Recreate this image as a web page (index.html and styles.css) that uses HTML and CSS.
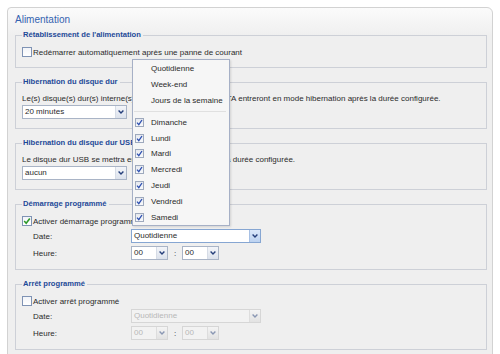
FILE: index.html
```html
<!DOCTYPE html>
<html lang="fr">

<head>
    <meta charset="UTF-8">
    <title>Alimentation</title>
    <link rel="stylesheet" href="styles.css">
</head>

<body>
    <div class="panel">
        <h1 class="panel-title">Alimentation</h1>

        <fieldset class="group">
            <legend>Rétablissement de l'alimentation</legend>
            <div class="check-row"><span class="check"></span>Redémarrer automatiquement après une panne de courant</div>
        </fieldset>

        <fieldset class="group">
            <legend>Hibernation du disque dur</legend>
            <div class="text-row">Le(s) disque(s) dur(s) interne(s) et le(s) disque(s) dur eSATA entreront en mode hibernation après la durée configurée.</div>
            <div class="select select-wide">
                <span class="select-value">20 minutes</span>
                <span class="select-btn"><svg width="6" height="4" viewBox="0 0 6 4"><path d="M0.6 0.6 L3 3 L5.4 0.6" fill="none" stroke="#263f7a" stroke-width="1.4"/></svg></span>
            </div>
        </fieldset>

        <fieldset class="group">
            <legend>Hibernation du disque dur USB</legend>
            <div class="text-row">Le disque dur USB se mettra en mode hibernation après la durée configurée.</div>
            <div class="select select-wide">
                <span class="select-value">aucun</span>
                <span class="select-btn"><svg width="6" height="4" viewBox="0 0 6 4"><path d="M0.6 0.6 L3 3 L5.4 0.6" fill="none" stroke="#263f7a" stroke-width="1.4"/></svg></span>
            </div>
        </fieldset>

        <fieldset class="group">
            <legend>Démarrage programmé</legend>
            <div class="check-row"><span class="check checked"><svg width="8" height="8" viewBox="0 0 8 8"><path d="M1.2 4 L3.2 6.2 L6.8 1.4" fill="none" stroke="#2f9a2a" stroke-width="1.6"/></svg></span>Activer démarrage programmé</div>
            <div class="field-row">
                <span class="field-label">Date:</span>
                <div class="select select-date focus">
                    <span class="select-value">Quotidienne</span>
                    <span class="select-btn"><svg width="6" height="4" viewBox="0 0 6 4"><path d="M0.6 0.6 L3 3 L5.4 0.6" fill="none" stroke="#263f7a" stroke-width="1.4"/></svg></span>
                </div>
            </div>
            <div class="field-row">
                <span class="field-label">Heure:</span>
                <div class="select select-time">
                    <span class="select-value">00</span>
                    <span class="select-btn"><svg width="6" height="4" viewBox="0 0 6 4"><path d="M0.6 0.6 L3 3 L5.4 0.6" fill="none" stroke="#263f7a" stroke-width="1.4"/></svg></span>
                </div>
                <span class="colon">:</span>
                <div class="select select-time">
                    <span class="select-value">00</span>
                    <span class="select-btn"><svg width="6" height="4" viewBox="0 0 6 4"><path d="M0.6 0.6 L3 3 L5.4 0.6" fill="none" stroke="#263f7a" stroke-width="1.4"/></svg></span>
                </div>
            </div>
        </fieldset>

        <fieldset class="group">
            <legend>Arrêt programmé</legend>
            <div class="check-row"><span class="check"></span>Activer arrêt programmé</div>
            <div class="field-row">
                <span class="field-label">Date:</span>
                <div class="select select-date disabled">
                    <span class="select-value">Quotidienne</span>
                    <span class="select-btn"><svg width="6" height="4" viewBox="0 0 6 4"><path d="M0.6 0.6 L3 3 L5.4 0.6" fill="none" stroke="#8a97b3" stroke-width="1.4"/></svg></span>
                </div>
            </div>
            <div class="field-row">
                <span class="field-label">Heure:</span>
                <div class="select select-time disabled">
                    <span class="select-value">00</span>
                    <span class="select-btn"><svg width="6" height="4" viewBox="0 0 6 4"><path d="M0.6 0.6 L3 3 L5.4 0.6" fill="none" stroke="#8a97b3" stroke-width="1.4"/></svg></span>
                </div>
                <span class="colon">:</span>
                <div class="select select-time disabled">
                    <span class="select-value">00</span>
                    <span class="select-btn"><svg width="6" height="4" viewBox="0 0 6 4"><path d="M0.6 0.6 L3 3 L5.4 0.6" fill="none" stroke="#8a97b3" stroke-width="1.4"/></svg></span>
                </div>
            </div>
        </fieldset>
    </div>

    <!-- open dropdown of the Date select -->
    <div class="menu">
        <div class="menu-item"><span class="menu-icon"></span>Quotidienne</div>
        <div class="menu-item"><span class="menu-icon"></span>Week-end</div>
        <div class="menu-item"><span class="menu-icon"></span>Jours de la semaine</div>
        <div class="menu-sep"></div>
        <div class="menu-item"><span class="menu-icon"><span class="menu-check"><svg width="7" height="7" viewBox="0 0 7 7"><path d="M1 3.6 L2.8 5.6 L6 1" fill="none" stroke="#2d4fb0" stroke-width="1.3"/></svg></span></span>Dimanche</div>
        <div class="menu-item"><span class="menu-icon"><span class="menu-check"><svg width="7" height="7" viewBox="0 0 7 7"><path d="M1 3.6 L2.8 5.6 L6 1" fill="none" stroke="#2d4fb0" stroke-width="1.3"/></svg></span></span>Lundi</div>
        <div class="menu-item"><span class="menu-icon"><span class="menu-check"><svg width="7" height="7" viewBox="0 0 7 7"><path d="M1 3.6 L2.8 5.6 L6 1" fill="none" stroke="#2d4fb0" stroke-width="1.3"/></svg></span></span>Mardi</div>
        <div class="menu-item"><span class="menu-icon"><span class="menu-check"><svg width="7" height="7" viewBox="0 0 7 7"><path d="M1 3.6 L2.8 5.6 L6 1" fill="none" stroke="#2d4fb0" stroke-width="1.3"/></svg></span></span>Mercredi</div>
        <div class="menu-item"><span class="menu-icon"><span class="menu-check"><svg width="7" height="7" viewBox="0 0 7 7"><path d="M1 3.6 L2.8 5.6 L6 1" fill="none" stroke="#2d4fb0" stroke-width="1.3"/></svg></span></span>Jeudi</div>
        <div class="menu-item"><span class="menu-icon"><span class="menu-check"><svg width="7" height="7" viewBox="0 0 7 7"><path d="M1 3.6 L2.8 5.6 L6 1" fill="none" stroke="#2d4fb0" stroke-width="1.3"/></svg></span></span>Vendredi</div>
        <div class="menu-item"><span class="menu-icon"><span class="menu-check"><svg width="7" height="7" viewBox="0 0 7 7"><path d="M1 3.6 L2.8 5.6 L6 1" fill="none" stroke="#2d4fb0" stroke-width="1.3"/></svg></span></span>Samedi</div>
    </div>
</body>

</html>
```

FILE: styles.css
```css
* {
    box-sizing: border-box;
}

body {
    margin: 0;
    background-color: #ffffff;
    color: #2b2b2b;
    font-family: "Liberation Sans", Arial, sans-serif;
    font-size: 8px;
}

.panel {
    margin: 7px 7px 0 7px;
    width: 486px;
    border: 1px solid #d2d2d2;
    border-radius: 4px 6px 0 0;
    background: linear-gradient(#fbfbfb, #efefef 28px);
    padding-bottom: 12px;
}

.panel-title {
    margin: 0;
    padding: 5px 0 0 7px;
    height: 19px;
    line-height: 14px;
    font-size: 10px;
    font-weight: normal;
    color: #3463b0;
}

.group {
    margin: 3px 5px 0 7px;
    padding: 6px 6px 9px 6px;
    border: 1px solid #cdd0d7;
    min-inline-size: 0;
}

.group + .group {
    margin-top: 9px;
}

.group legend {
    padding: 0 2px 0 1px;
    line-height: 10px;
    font-size: 7.6px;
    font-weight: bold;
    color: #1e4a98;
}

.check-row {
    display: flex;
    align-items: center;
    height: 12px;
    white-space: nowrap;
}

.check {
    width: 10px;
    height: 10px;
    margin-right: 1px;
    border: 1px solid #7f93b4;
    background: linear-gradient(#f2f4f8, #ffffff);
    display: flex;
    align-items: center;
    justify-content: center;
}

.text-row {
    height: 12px;
    line-height: 12px;
    white-space: nowrap;
}

.field-row {
    display: flex;
    align-items: center;
    height: 14px;
    margin-top: 3px;
    padding-left: 11px;
}

.check-row + .field-row {
    margin-top: 2px;
}

.field-label {
    width: 98px;
}

.colon {
    width: 14px;
    text-align: center;
}

.select {
    display: flex;
    height: 14px;
    border: 1px solid #a9b4c6;
    background-color: #ffffff;
}

.select-wide {
    width: 105px;
}

.select-date {
    width: 130px;
}

.select-time {
    width: 37px;
}

.select-value {
    flex: 1;
    padding-left: 2px;
    line-height: 12px;
    white-space: nowrap;
}

.select-btn {
    width: 11px;
    display: flex;
    align-items: center;
    justify-content: center;
    background: linear-gradient(#f3f5f9, #dce2ec);
    border-left: 1px solid #d6dce6;
}

.select.focus {
    border-color: #86a6d2;
}

.select.focus .select-btn {
    background: linear-gradient(#dbe8fa, #bcd2f0);
    border-left-color: #a7c0e4;
}

.select.disabled {
    border-color: #d6d6d6;
    background-color: #f2f2f2;
    color: #b8b8b8;
}

.select.disabled .select-btn {
    background: linear-gradient(#f4f4f4, #e2e2e2);
    border-left-color: #dddddd;
}

.menu {
    position: absolute;
    top: 59px;
    left: 132px;
    width: 98px;
    padding-top: 1px;
    border: 1px solid #a6b0c6;
    background-color: #f6f6f6;
    box-shadow: 1px 1px 2px rgba(0, 0, 0, 0.12);
}

.menu-item {
    display: flex;
    align-items: center;
    height: 15.8px;
    white-space: nowrap;
}

.menu-icon {
    width: 18px;
    height: 100%;
    display: flex;
    align-items: center;
    padding-left: 2px;
}

.menu-check {
    width: 9px;
    height: 9px;
    border: 1px solid #9ea9bd;
    background: linear-gradient(#e6e9ef, #f8f9fb);
    display: flex;
    align-items: center;
    justify-content: center;
}

.menu-sep {
    height: 6px;
    border-bottom: 1px solid #e0e0e0;
    margin: 0 3px 0 1px;
    transform: translateY(-2px);
}
```
